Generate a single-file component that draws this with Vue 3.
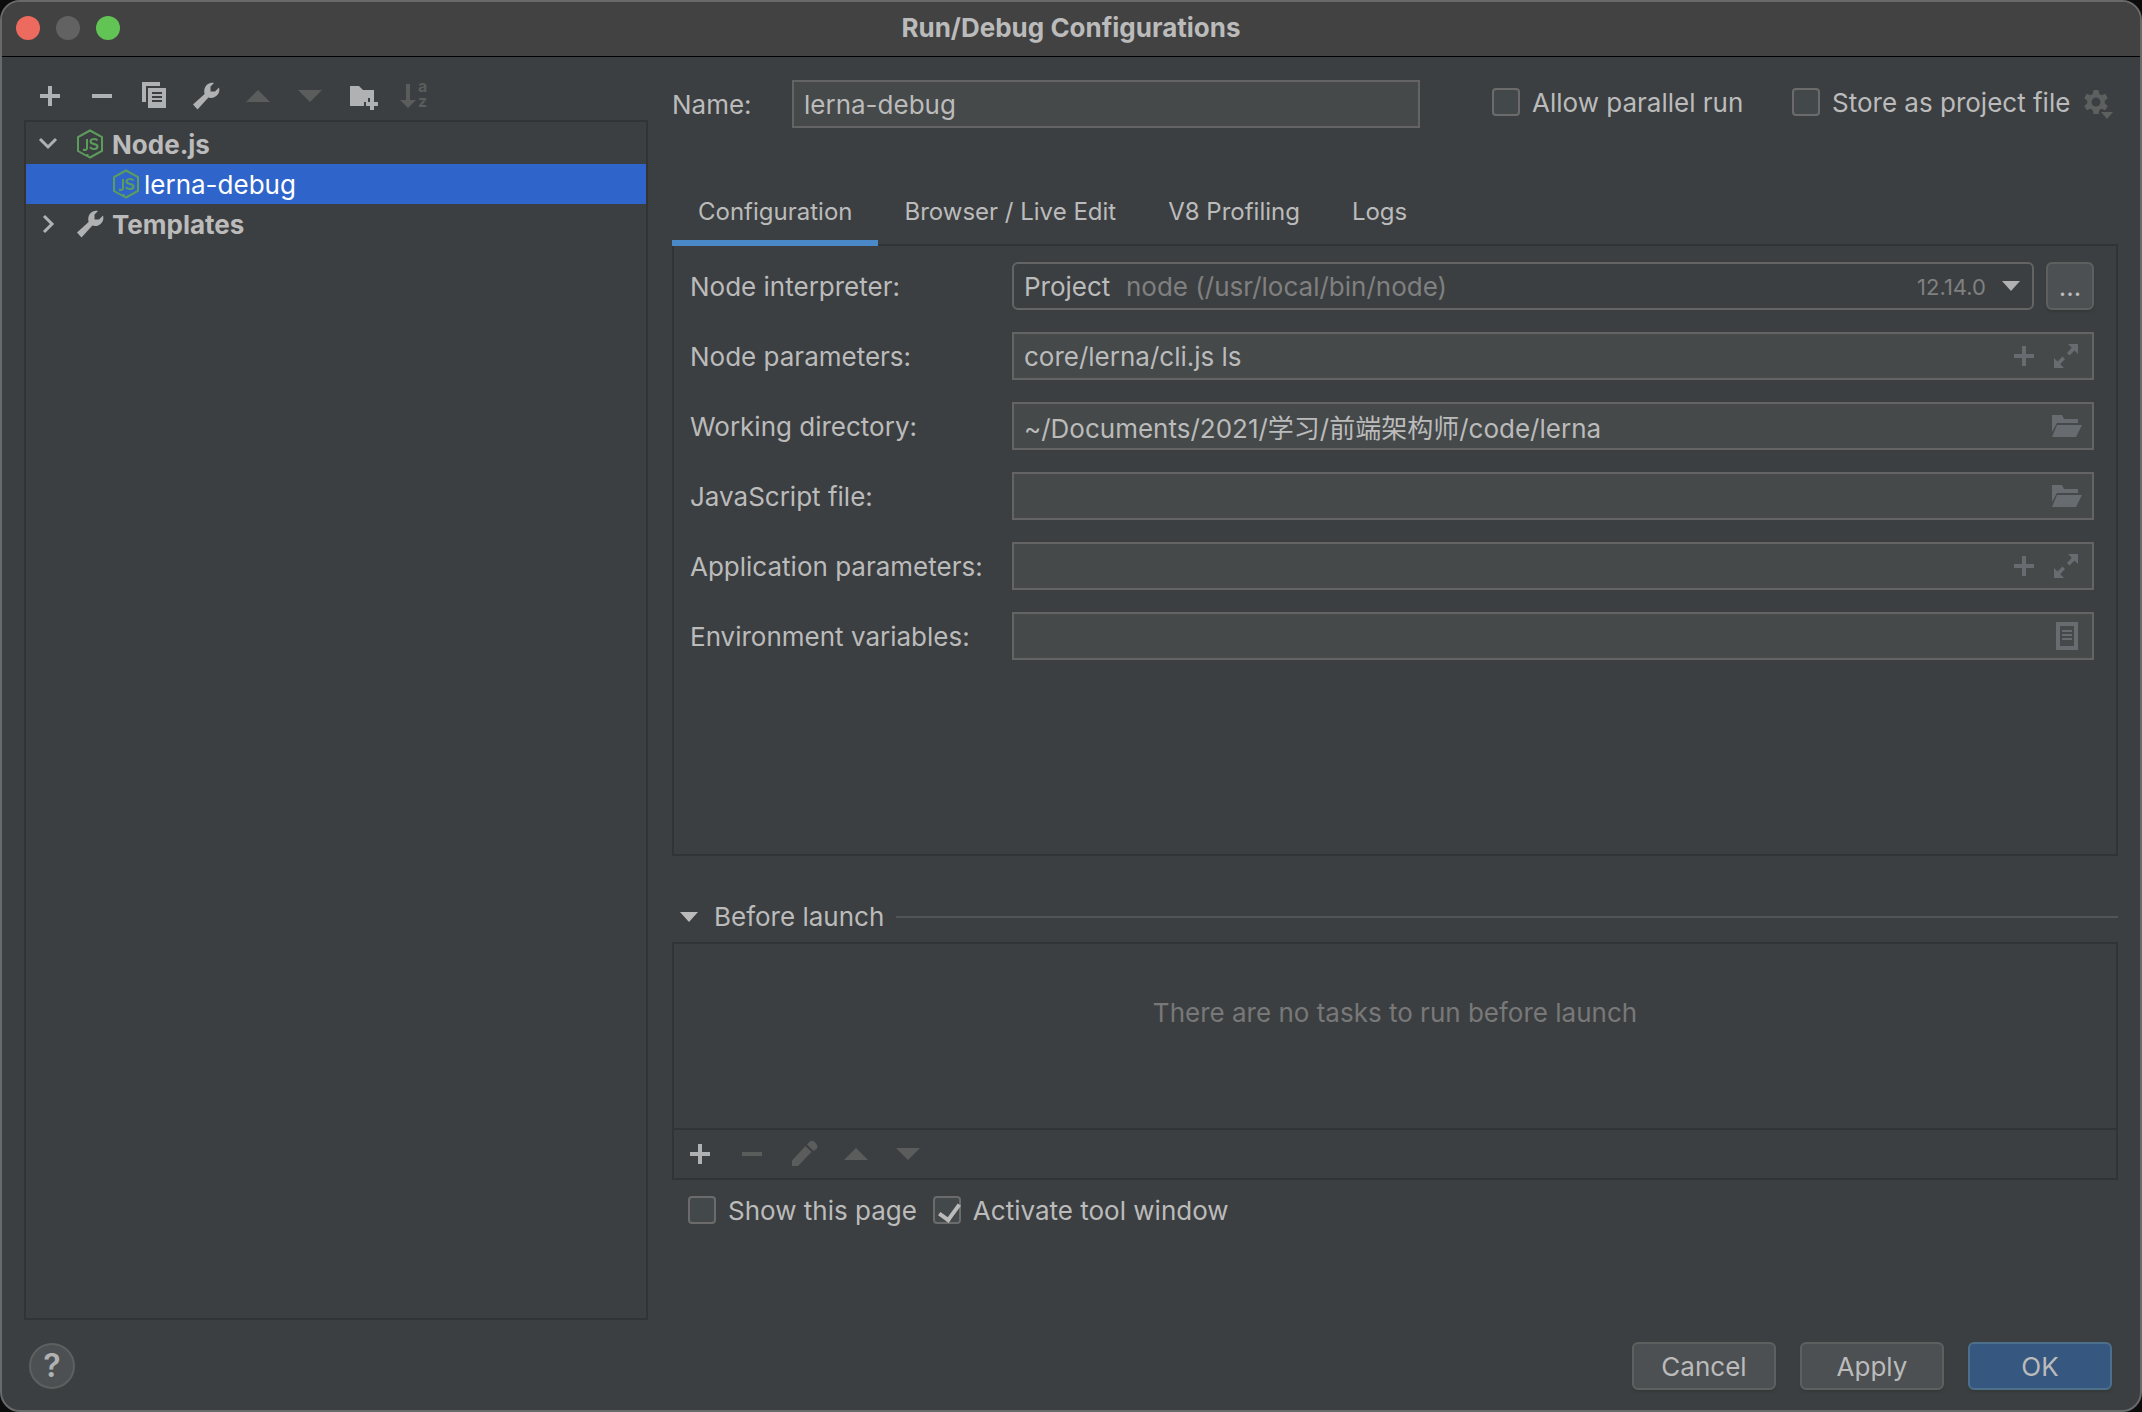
<script setup>
import { ref } from 'vue'

const name = ref('lerna-debug')
const parallel = ref(false)
const stored = ref(false)
const showPage = ref(false)
const activate = ref(true)
const tab = ref('Configuration')
const tabs = ['Configuration', 'Browser / Live Edit', 'V8 Profiling', 'Logs']

const fields = ref([
  { id: 'node-params', label: 'Node parameters:', value: 'core/lerna/cli.js ls', icons: ['plus', 'expand'] },
  { id: 'work-dir', label: 'Working directory:', value: '~/Documents/2021/学习/前端架构师/code/lerna', icons: ['folder'] },
  { id: 'js-file', label: 'JavaScript file:', value: '', icons: ['folder'] },
  { id: 'app-params', label: 'Application parameters:', value: '', icons: ['plus', 'expand'] },
  { id: 'env', label: 'Environment variables:', value: '', icons: ['list'] },
])

const paths = {
  plus: 'M14 6h4v8h8v4h-8v8h-4v-8H6v-4h8z',
  minus: 'M6 14h20v4H6z',
  copy: 'M4 2h18v4H8v16H4zM10 8h18v20H10zM14 12v2h10v-2zm0 4v2h10v-2zm0 4v2h10v-2z',
  wrench: 'M3 24.500L14.600 14C12.800 8 17.500 1.600 24 3L20.500 6.600V11.400H25L29 7.600C31 14 24.500 19.600 18.400 17.600L7.500 29.500Z',
  up: 'M4 22L16 10L28 22z',
  down: 'M4 10h24L16 22z',
  newFolder: 'M4 6h9l4 4h11v8h-6v4h-4v4H4zM24 18h4v4h4v4h-4v4h-4v-4h-4v-4h4z',
  pencil: 'M4 22.500L17.500 8L23.500 14L10 28H4zM19 6.500L22 3.500C24 .5 31.500 6.500 29 10.500L25.500 13z',
  expand: 'M18 4h10v10l-3.500-3.500L19.500 15.500L17 13L21.800 7.800zM4 28V18l3.500 3.500L12.500 16.500L15 19L10.200 24.200L14 28z',
  folder: 'M2 5h10l2 4h14v4H7L2 22zM7 15h25l-6 12H2z',
  list: 'M6 2h22v28H6zM10 6v20h14V6zM12 10h10v2H12zm0 4h10v2H12zm0 4h10v2H12z',
}

const sideTools = [
  { icon: 'plus', label: 'Add' },
  { icon: 'minus', label: 'Remove' },
  { icon: 'copy', label: 'Copy' },
  { icon: 'wrench', label: 'Edit templates' },
  { icon: 'up', label: 'Move up', off: true },
  { icon: 'down', label: 'Move down', off: true },
  { icon: 'newFolder', label: 'New folder' },
]
const taskTools = [
  { icon: 'plus', label: 'Add task' },
  { icon: 'minus', label: 'Remove task', off: true },
  { icon: 'pencil', label: 'Edit task', off: true },
  { icon: 'up', label: 'Task up', off: true },
  { icon: 'down', label: 'Task down', off: true },
]
const tips = { plus: 'Insert', expand: 'Expand', folder: 'Browse', list: 'Edit variables' }
</script>

<template>
  <div class="window">
    <header class="titlebar">
      <div class="lights">
        <button class="light red" aria-label="Close"></button>
        <button class="light grey" aria-label="Minimize"></button>
        <button class="light green" aria-label="Zoom"></button>
      </div>
      <h1>Run/Debug Configurations</h1>
    </header>

    <main class="body">
      <aside class="sidebar">
        <div class="tools">
          <button v-for="t in sideTools" :key="t.label" class="tool" :disabled="t.off" :aria-label="t.label">
            <svg viewBox="0 0 32 32"><path fill-rule="evenodd" :d="paths[t.icon]" /></svg>
          </button>
          <button class="tool sort" disabled aria-label="Sort">
            <svg viewBox="0 0 16 32"><path d="M6 4h4v16h6l-8 8L0 20h6z" /></svg>
            <span class="letters"><span>a</span><span>z</span></span>
          </button>
        </div>

        <ul class="tree">
          <li class="row">
            <svg class="chev" viewBox="0 0 20 20"><path d="M2 5L10 13L18 5" /></svg>
            <svg class="node" viewBox="0 0 28 30">
              <path d="M11 27L2 22V8L14 1.500L26 8V22L14 28.500L11.500 27V25" />
              <path d="M11 10V19C11 21 9.500 21.500 7 20.500M21.500 11.500C20 9.500 14.500 9.500 14.500 12.500C14.500 16 21.500 14 21.500 17.500C21.500 20.800 15.500 20.800 14 18" />
            </svg>
            <b>Node.js</b>
          </li>
          <li class="row child selected">
            <svg class="node" viewBox="0 0 28 30">
              <path d="M11 27L2 22V8L14 1.500L26 8V22L14 28.500L11.500 27V25" />
              <path d="M11 10V19C11 21 9.500 21.500 7 20.500M21.500 11.500C20 9.500 14.500 9.500 14.500 12.500C14.500 16 21.500 14 21.500 17.500C21.500 20.800 15.500 20.800 14 18" />
            </svg>
            <span>lerna-debug</span>
          </li>
          <li class="row">
            <svg class="chev" viewBox="0 0 20 20"><path d="M6 2L14 10L6 18" /></svg>
            <svg class="wrench" viewBox="2 2 28 28"><path :d="paths.wrench" /></svg>
            <b>Templates</b>
          </li>
        </ul>
      </aside>

      <section class="editor">
        <div class="head">
          <label class="name-label" for="cfg-name">Name:</label>
          <div class="field name"><input id="cfg-name" v-model="name" type="text"></div>
          <label class="check parallel"><input v-model="parallel" type="checkbox"><span>Allow parallel run</span></label>
          <div class="store">
            <label class="check"><input v-model="stored" type="checkbox"><span>Store as project file</span></label>
            <button class="gear" disabled aria-label="Storage options">
              <svg viewBox="0 0 32 32">
                <path fill-rule="evenodd" d="M11.500 2h5l.8 4 2.200 1.200 3.700-1.400 2.500 4.200-3 2.800v2.400l3 2.800-2.500 4.200-3.700-1.400-2.200 1.200-.8 4h-5l-.8-4-2.200-1.200-3.700 1.400L2.300 18l3-2.800v-2.400l-3-2.800 2.500-4.200 3.700 1.400L10.700 6zM14 9.500a4.500 4.500 0 100 9 4.500 4.500 0 000-9z" />
                <path d="M19 24h12l-6 7z" />
              </svg>
            </button>
          </div>
        </div>

        <nav class="tabs" role="tablist">
          <button v-for="t in tabs" :key="t" role="tab" class="tab" :class="{ active: t === tab }" :aria-selected="t === tab" @click="tab = t">{{ t }}</button>
        </nav>

        <div class="panel">
          <label for="interp">Node interpreter:</label>
          <div class="interp">
            <div class="combo">
              <select id="interp"><option>Project</option></select>
              <span class="hint">node (/usr/local/bin/node)</span>
              <span class="version">12.14.0</span>
              <svg class="arrow" viewBox="0 0 18 10"><path d="M0 0h18L9 10z" /></svg>
            </div>
            <button class="more" aria-label="Browse interpreters">...</button>
          </div>
          <template v-for="f in fields" :key="f.id">
            <label :for="f.id">{{ f.label }}</label>
            <div class="field">
              <input :id="f.id" v-model="f.value" type="text">
              <button v-for="i in f.icons" :key="i" class="inner" :aria-label="tips[i]">
                <svg viewBox="0 0 32 32"><path fill-rule="evenodd" :d="paths[i]" /></svg>
              </button>
            </div>
          </template>
        </div>

        <div class="divider">
          <svg class="arrow" viewBox="0 0 18 10"><path d="M0 0h18L9 10z" /></svg>
          <h2>Before launch</h2>
          <hr>
        </div>
        <div class="tasks">
          <p class="empty">There are no tasks to run before launch</p>
          <div class="task-tools">
            <button v-for="t in taskTools" :key="t.label" class="tool" :disabled="t.off" :aria-label="t.label">
              <svg viewBox="0 0 32 32"><path fill-rule="evenodd" :d="paths[t.icon]" /></svg>
            </button>
          </div>
        </div>
        <div class="options">
          <label class="check"><input v-model="showPage" type="checkbox"><span>Show this page</span></label>
          <label class="check"><input v-model="activate" type="checkbox"><span>Activate tool window</span></label>
        </div>
      </section>
    </main>

    <footer class="footer">
      <button class="help" aria-label="Help">?</button>
      <div class="actions">
        <button class="btn">Cancel</button>
        <button class="btn">Apply</button>
        <button class="btn primary">OK</button>
      </div>
    </footer>
  </div>
</template>

<style>
body {
  background: #0c0c0c;
}
</style>

<style scoped>
* {
  box-sizing: border-box;
}
.window {
  display: flex;
  flex-direction: column;
  min-height: 100vh;
  border: 2px solid #68696a;
  border-radius: 20px;
  overflow: hidden;
  background: #3c3f41;
  color: #bbb;
  font: 26px/32px Inter, "Noto Sans CJK SC", sans-serif;
}
button, input, select {
  margin: 0;
  padding: 0;
  border: 0;
  background: none;
  color: inherit;
  font: inherit;
}
svg {
  display: block;
  fill: currentColor;
}
.titlebar {
  display: grid;
  grid-template-columns: 1fr auto 1fr;
  align-items: center;
  height: 55px;
  padding: 0 14px 2px;
  background: #424242;
  border-bottom: 1px solid #000;
}
h1 {
  margin: 0;
  font-size: 26px;
  font-weight: 700;
}
.lights {
  display: flex;
  gap: 16px;
}
.light {
  width: 24px;
  height: 24px;
  border-radius: 50%;
}
.red { background: #ed6a5e; }
.grey { background: #626262; }
.green { background: #61c454; }

.body {
  flex: 1;
  display: flex;
  gap: 24px;
  padding: 0 22px;
}
.sidebar {
  display: flex;
  flex-direction: column;
  width: 624px;
  max-width: 40%;
}
.tools {
  display: flex;
  gap: 20px;
  padding: 23px 10px 8px;
}
.tool {
  width: 32px;
  height: 32px;
  color: #afb1b3;
}
.tool:disabled {
  color: #5b5c5c;
}
.sort {
  display: flex;
  align-items: center;
  gap: 2px;
  padding-left: 2px;
}
.sort svg {
  width: 16px;
  height: 32px;
}
.letters {
  display: grid;
  padding-bottom: 4px;
  font-size: 16px;
  font-weight: 700;
  line-height: 15px;
}
.tree {
  flex: 1;
  margin: 0;
  padding: 2px 0;
  border: 2px solid #323334;
  list-style: none;
}
.row {
  display: flex;
  align-items: center;
  height: 40px;
  padding-left: 12px;
}
.row b {
  margin-left: 8px;
  padding-top: 2px;
  font-weight: 700;
}
.child {
  padding-left: 86px;
}
.child span {
  margin-left: 4px;
  padding-top: 2px;
}
.selected {
  background: #2f65ca;
  color: #fff;
}
.chev {
  width: 20px;
  height: 20px;
  margin-right: 18px;
  fill: none;
  stroke: #afb1b3;
  stroke-width: 3;
}
.node {
  width: 28px;
  height: 30px;
  fill: none;
  stroke: #5d9d5b;
  stroke-width: 2;
}
.wrench {
  width: 28px;
  height: 28px;
  color: #afb1b3;
}

.editor {
  flex: 1;
  min-width: 0;
}
.head {
  display: flex;
  align-items: center;
  padding-top: 23px;
}
.name-label {
  width: 120px;
  padding-top: 2px;
}
.field {
  display: flex;
  align-items: center;
  height: 48px;
  border: 2px solid #646464;
  background: #45494a;
}
.field input {
  flex: 1;
  min-width: 0;
  height: 100%;
  padding: 0 10px;
  outline: 0;
}
.name {
  flex: 1;
  margin-right: 72px;
}
.check {
  display: flex;
  align-items: center;
  gap: 12px;
  white-space: nowrap;
}
.check span {
  padding-top: 2px;
}
.check input {
  appearance: none;
  width: 28px;
  height: 28px;
  border: 2px solid #6b6b6b;
  border-radius: 4px;
  background: #43494a;
}
.check input:checked::after {
  content: "";
  display: block;
  width: 9px;
  height: 17px;
  margin: 2px 8px;
  border: solid #bbb;
  border-width: 0 4px 4px 0;
  transform: rotate(36deg);
}
.parallel {
  width: 300px;
}
.head .check {
  padding-bottom: 4px;
}
.store {
  display: flex;
  align-items: center;
  justify-content: space-between;
  width: 326px;
  padding-right: 4px;
}
.gear {
  width: 32px;
  height: 32px;
  color: #5e6060;
}

.tabs {
  display: flex;
  margin-top: 46px;
  background: linear-gradient(#323334, #323334) left bottom / 100% 2px no-repeat;
}
.tab {
  height: 72px;
  padding: 10px 26px 0;
  border-bottom: 6px solid transparent;
  font-size: 24px;
}
.tab.active {
  border-color: #4a88c7;
}
.panel {
  display: grid;
  grid-template-columns: 322px 1fr;
  align-content: start;
  align-items: center;
  row-gap: 22px;
  min-height: 610px;
  padding: 16px 22px 16px 16px;
  border: 2px solid #323334;
  border-top: 0;
}
.panel > label {
  padding-top: 2px;
}
.interp {
  display: flex;
  gap: 12px;
}
.combo {
  flex: 1;
  display: flex;
  align-items: center;
  position: relative;
}
.combo select {
  appearance: none;
  width: 100%;
  height: 48px;
  padding: 2px 10px 0;
  border: 2px solid #646464;
  border-radius: 6px;
}
.hint, .version, .combo .arrow {
  position: absolute;
  pointer-events: none;
  color: #808080;
}
.hint, .version {
  padding-top: 2px;
}
.hint {
  left: 114px;
}
.version {
  right: 48px;
  font-size: 22px;
}
.arrow {
  width: 18px;
  height: 10px;
}
.combo .arrow {
  right: 14px;
  color: #afb1b3;
}
.more {
  width: 48px;
  height: 48px;
  padding-top: 2px;
  border: 2px solid #5e6060;
  border-radius: 6px;
  background: #4c5052;
  box-shadow: 0 2px 2px #36393a;
}
.inner {
  width: 32px;
  height: 32px;
  margin-right: 10px;
  color: #666c70;
}

.divider {
  display: flex;
  align-items: center;
  gap: 16px;
  margin-top: 45px;
  padding-left: 8px;
}
h2 {
  margin: 0;
  font-size: 26px;
  font-weight: 400;
}
hr {
  flex: 1;
  height: 2px;
  margin: 0 0 0 -4px;
  border: 0;
  background: #515556;
}
.tasks {
  margin-top: 9px;
  border: 2px solid #323334;
}
.empty {
  margin: 0;
  min-height: 184px;
  padding-top: 53px;
  color: #787878;
  text-align: center;
}
.task-tools {
  display: flex;
  gap: 20px;
  padding: 8px 10px;
  border-top: 2px solid #323334;
}
.options {
  display: flex;
  gap: 16px;
  padding: 13px 16px;
}

.footer {
  display: flex;
  align-items: center;
  justify-content: space-between;
  padding: 22px 28px 20px 27px;
}
.help {
  width: 46px;
  height: 46px;
  border: 2px solid #5e6060;
  border-radius: 50%;
  background: #4c5052;
  color: #afb1b3;
  font-size: 32px;
  font-weight: 600;
}
.actions {
  display: flex;
  gap: 24px;
}
.btn {
  width: 144px;
  height: 48px;
  padding-top: 2px;
  border: 2px solid #5e6060;
  border-radius: 6px;
  background: #4c5052;
  box-shadow: 0 2px 2px #36393a;
}
.primary {
  border-color: #4c708c;
  background: #365880;
}
</style>
